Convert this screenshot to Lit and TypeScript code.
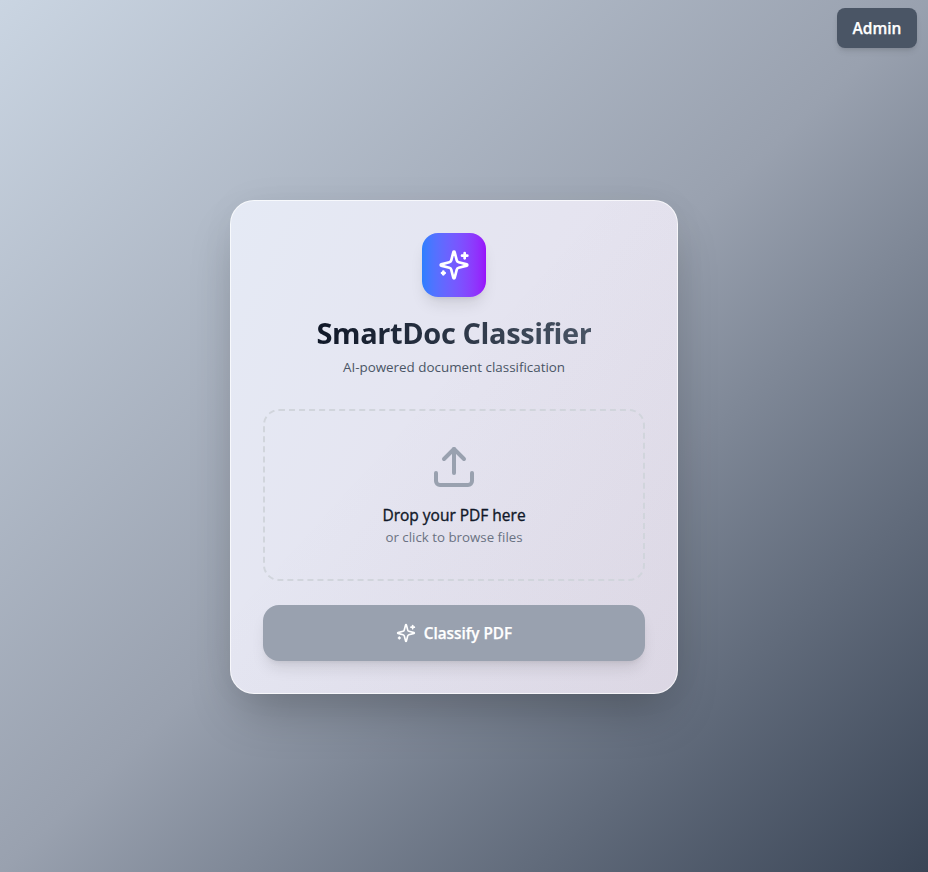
import { LitElement, html, css, svg } from "lit";
import { customElement } from "lit/decorators.js";

const sparkles = svg`
  <path d="M9.937 15.5A2 2 0 0 0 8.5 14.063l-6.135-1.582a.5.5 0 0 1 0-.962L8.5 9.936A2 2 0 0 0 9.937 8.5l1.582-6.135a.5.5 0 0 1 .963 0L14.063 8.5A2 2 0 0 0 15.5 9.937l6.135 1.581a.5.5 0 0 1 0 .964L15.5 14.063a2 2 0 0 0-1.437 1.437l-1.582 6.135a.5.5 0 0 1-.963 0z"/>
  <path d="M20 3v4"/><path d="M22 5h-4"/><path d="M4 17v2"/><path d="M5 18H3"/>`;

@customElement("app-root")
export class AppRoot extends LitElement {
  static styles = css`
    :host {
      display: block;
      font-family: "Segoe UI", "Open Sans", "Noto Sans", sans-serif;
    }
    * { box-sizing: border-box; margin: 0; }
    .page {
      display: flex;
      flex-direction: column;
      height: 872px;
      overflow: hidden;
      background: linear-gradient(to bottom right in oklab, #cad5e2, #99a1af 50%, #3a4556);
    }
    .bar { display: flex; justify-content: flex-end; padding: 8px 11px 0 0; }
    .admin {
      width: 80px;
      height: 40px;
      border: 0;
      border-radius: 8px;
      background: #4a5565;
      color: #fff;
      font: 600 15.5px/24px "Segoe UI", "Open Sans", sans-serif;
      -webkit-text-stroke: 0.25px currentColor;
      padding: 0;
      box-shadow: 0 4px 6px -1px rgb(0 0 0 / 0.1), 0 2px 4px -2px rgb(0 0 0 / 0.1);
    }
    .card {
      width: 448px;
      height: 494px;
      margin: 152px 0 0 230px;
      padding: 32px;
      border: 1px solid rgb(255 255 255 / 0.7);
      border-radius: 24px;
      background:
        linear-gradient(to bottom right, transparent 40%, rgb(60 60 90 / 0.05)) border-box,
        linear-gradient(115deg, #e5eaf5, #e5e4f0 50%, #e4dfeb) border-box;
      box-shadow: 0 25px 50px -12px rgb(0 0 0 / 0.25), 0 0 40px rgb(0 0 0 / 0.03);
    }
    .head { display: flex; flex-direction: column; align-items: center; }
    .logo {
      display: grid;
      place-items: center;
      width: 64px;
      height: 64px;
      border-radius: 16px;
      background: linear-gradient(to right in oklab, #2b7fff, #7c52ff 60%, #9810fa);
      box-shadow: 0 10px 15px -3px rgb(0 0 0 / 0.1), 0 4px 6px -4px rgb(0 0 0 / 0.1);
    }
    svg { fill: none; stroke: currentColor; stroke-width: 2; stroke-linecap: round; stroke-linejoin: round; }
    .logo svg { width: 32px; height: 32px; color: #fff; }
    .title {
      margin-top: 16px;
      font-size: 29px;
      line-height: 40px;
      font-weight: 700;
      letter-spacing: -0.4px;
      white-space: nowrap;
      color: transparent;
      background: linear-gradient(to right in oklab, #101828, #4a5565);
      background-clip: text;
      -webkit-background-clip: text;
    }
    .sub { margin-top: 4px; font-size: 13.4px; line-height: 20px; color: #4a5565; white-space: nowrap; }
    .drop {
      display: flex;
      flex-direction: column;
      align-items: center;
      height: 172px;
      margin-top: 32px;
      padding-top: 32px;
      border: 2px dashed #d1d5dc;
      border-radius: 16px;
    }
    .drop svg { width: 48px; height: 48px; color: #99a1af; }
    .lead {
      margin-top: 12px;
      font-size: 15.5px;
      line-height: 24px;
      font-weight: 500;
      color: #101828;
      -webkit-text-stroke: 0.35px currentColor;
    }
    .hint { font-size: 13.3px; line-height: 20px; color: #6a7282; }
    .classify {
      display: flex;
      align-items: center;
      justify-content: center;
      gap: 8px;
      width: 100%;
      height: 56px;
      margin-top: 24px;
      border: 0;
      border-radius: 16px;
      background: #99a1af;
      color: #fff;
      font: 600 15.3px/24px "Segoe UI", "Open Sans", sans-serif;
      -webkit-text-stroke: 0.25px currentColor;
      box-shadow: 0 10px 15px -3px rgb(0 0 0 / 0.1), 0 4px 6px -4px rgb(0 0 0 / 0.1);
    }
    .classify svg { width: 20px; height: 20px; }
  `;

  render() {
    return html`
      <div class="page">
        <div class="bar"><button class="admin">Admin</button></div>
        <main class="card">
          <div class="head">
            <div class="logo"><svg viewBox="0 0 24 24">${sparkles}</svg></div>
            <h1 class="title">SmartDoc Classifier</h1>
            <p class="sub">AI-powered document classification</p>
          </div>
          <div class="drop">
            <svg viewBox="0 0 24 24">
              <path d="M21 15v4a2 2 0 0 1-2 2H5a2 2 0 0 1-2-2v-4"/>
              <path d="m17 8-5-5-5 5"/><path d="M12 3v12"/>
            </svg>
            <p class="lead">Drop your PDF here</p>
            <p class="hint">or click to browse files</p>
          </div>
          <button class="classify">
            <svg viewBox="0 0 24 24">${sparkles}</svg>
            <span>Classify PDF</span>
          </button>
        </main>
      </div>`;
  }
}
